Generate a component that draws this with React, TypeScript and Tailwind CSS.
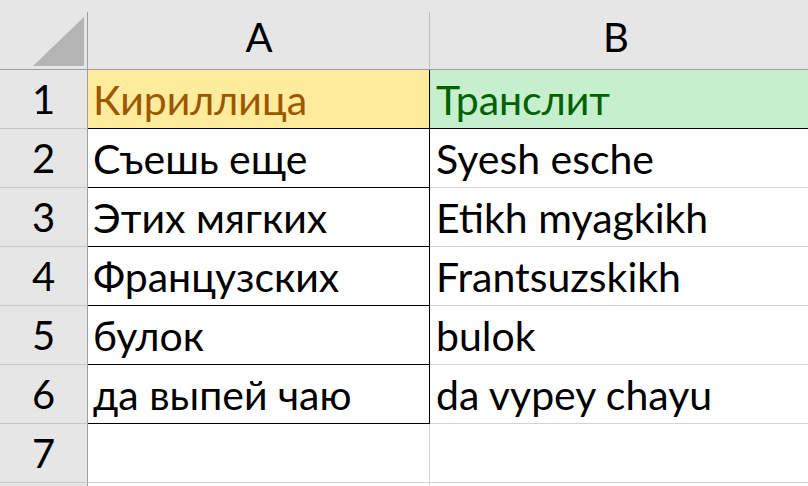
const rows = [
  { n: 1, a: "Кириллица", b: "Транслит", header: true },
  { n: 2, a: "Съешь еще", b: "Syesh esche" },
  { n: 3, a: "Этих мягких", b: "Etikh myagkikh" },
  { n: 4, a: "Французских", b: "Frantsuzskikh" },
  { n: 5, a: "булок", b: "bulok" },
  { n: 6, a: "да выпей чаю", b: "da vypey chayu" },
  { n: 7, a: "", b: "" },
  { n: 8, a: "", b: "" },
];

function RowHead({ n }: { n: number }) {
  return (
    <div className="flex h-[59px] items-end justify-center border-r border-b border-r-[#9f9f9f] border-b-[#c8c8c8] bg-[#e6e6e6] pb-[9px] text-[40px] leading-none text-black">
      {n < 8 ? n : ""}
    </div>
  );
}

export default function App() {
  return (
    <div
      className="h-[486px] w-[808px] overflow-hidden bg-white"
      style={{ fontFamily: "Lato, 'Liberation Sans', sans-serif" }}
    >
      <div className="grid grid-cols-[88px_342px_1fr]">
        {/* column headers */}
        <div className="relative h-[70px] border-b border-[#9f9f9f] bg-[#e6e6e6]">
          <div className="absolute top-[12px] right-0 bottom-0 w-px bg-[#9f9f9f]" />
          <svg className="absolute top-[17px] left-[33px]" width="51" height="49" viewBox="0 0 51 49">
            <polygon points="51,0 51,49 0,49" fill="#b4b4b4" />
          </svg>
        </div>
        <div className="relative flex h-[70px] items-end justify-center border-b border-[#9f9f9f] bg-[#e6e6e6] pb-[12px] text-[40px] leading-none text-black">
          <div className="absolute top-[12px] right-0 bottom-0 w-px bg-[#bdbdbd]" />
          A
        </div>
        <div className="relative flex h-[70px] items-end justify-center border-b border-[#9f9f9f] bg-[#e6e6e6] pb-[12px] pr-[6px] text-[40px] leading-none text-black">
          B
        </div>

        {rows.map((r) => {
          const boxed = r.n <= 6;
          return [
            <RowHead key={`h${r.n}`} n={r.n} />,
            <div
              key={`a${r.n}`}
              className={`flex h-[59px] items-end border-r border-b pb-[8px] pl-[5px] text-[41px] leading-none whitespace-nowrap ${
                boxed ? "border-black" : "border-[#d4d4d4]"
              } ${r.header ? "bg-[#ffeb9c] text-[#9c5700]" : "text-black"}`}
            >
              {r.a}
            </div>,
            <div
              key={`b${r.n}`}
              className={`flex h-[59px] items-end border-b pb-[8px] pl-[6px] text-[41px] leading-none whitespace-nowrap ${
                r.header ? "border-black bg-[#c6efce] text-[#006100]" : "border-[#d4d4d4] text-black"
              }`}
            >
              {r.b}
            </div>,
          ];
        })}
      </div>
    </div>
  );
}
